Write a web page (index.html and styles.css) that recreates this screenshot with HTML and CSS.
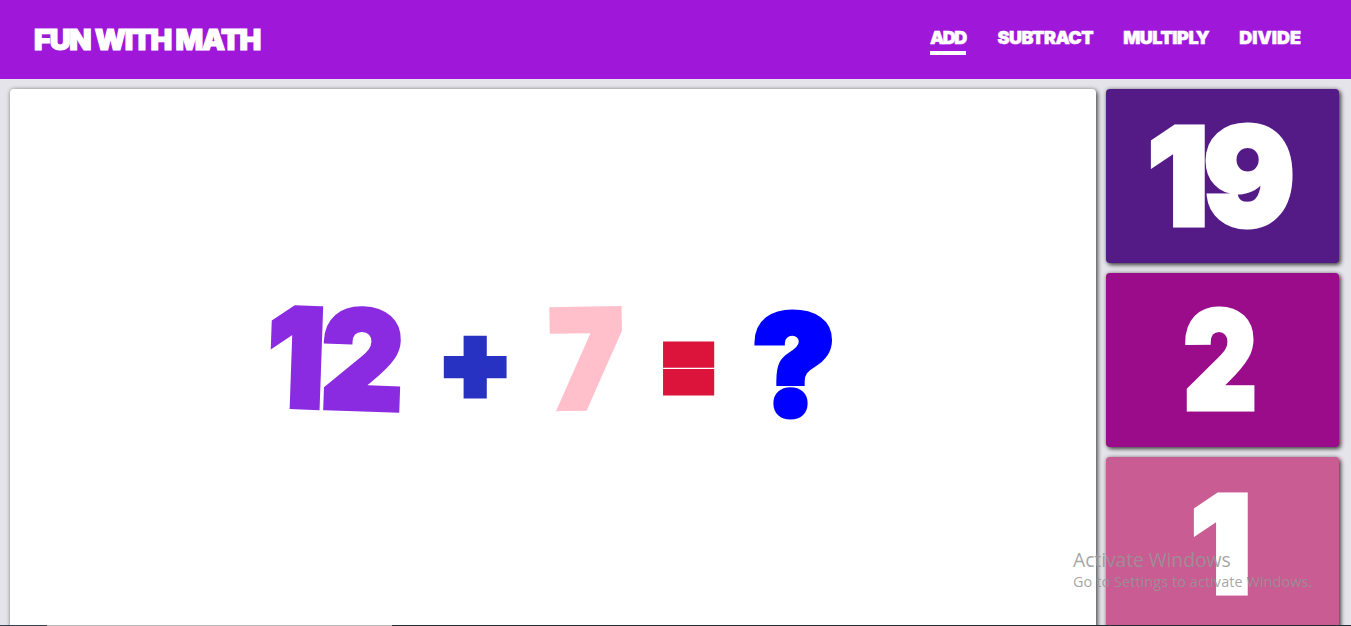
FILE: index.html
```html
<!DOCTYPE html>
<html lang="en">
<head>
<meta charset="utf-8">
<title>Fun With Math</title>
<link rel="stylesheet" href="styles.css">
</head>
<body>
<header class="topbar">
  <div class="logo">FUN WITH MATH</div>
  <nav class="nav">
    <a class="nav-link link-add active">ADD</a>
    <a class="nav-link">SUBTRACT</a>
    <a class="nav-link">MULTIPLY</a>
    <a class="nav-link link-divide">DIVIDE</a>
  </nav>
</header>
<main class="game">
  <section class="board">
    <span class="term num-a">12</span>
    <span class="term op-plus">+</span>
    <span class="term num-b">7</span>
    <span class="term op-eq">=</span>
    <span class="term ask">?</span>
  </section>
  <aside class="answers">
    <div class="answer answer-1"><span class="answer-text">19</span></div>
    <div class="answer answer-2"><span class="answer-text text-narrow">2</span></div>
    <div class="answer answer-3"><span class="answer-text">1</span></div>
  </aside>
</main>
<div class="taskbar"><i class="seg seg-a"></i><i class="seg seg-b"></i><i class="seg seg-c"></i></div>
<div class="watermark">
  <div class="wm-title">Activate Windows</div>
  <div class="wm-sub">Go to Settings to activate Windows.</div>
</div>
</body>
</html>
```
FILE: styles.css
```css
* { box-sizing: border-box; }
html, body { height: 100%; }
body {
  margin: 0;
  height: 626px;
  overflow: hidden;
  background: #e4e4ea;
  font-family: Inter, "Liberation Sans", sans-serif;
  font-weight: 900;
  color: #fff;
  position: relative;
}
.topbar {
  height: 79px;
  background: #9f18d9;
  display: flex;
  align-items: center;
  justify-content: space-between;
  padding: 0 50px 0 34px;
}
.logo {
  font-size: 29px;
  letter-spacing: -1.3px;
  line-height: 1;
  -webkit-text-stroke: 1.2px #fff;
}
.nav { display: flex; gap: 30px; }
.nav-link {
  font-size: 18px;
  line-height: 22px;
  letter-spacing: -0.5px;
  padding-top: 3px;
  padding-bottom: 2px;
  border-bottom: 4px solid transparent;
  -webkit-text-stroke: 0.5px #fff;
}
.nav-link.active { border-bottom-color: #fff; }
.link-add { letter-spacing: -1.6px; margin-right: 2px; }
.link-divide { letter-spacing: 0; }
.game {
  display: grid;
  grid-template-columns: 1086px 233px;
  gap: 10px;
  padding: 10px 0 0 10px;
  height: 556px;
}
.board {
  background: #fff;
  border-radius: 4px;
  box-shadow: 2px 2px 4px rgba(0, 0, 0, .55), 0 0 4px rgba(0, 0, 0, .3);
  display: flex;
  align-items: center;
  justify-content: center;
  gap: 34px;
  padding-right: 4px;
}
.term { display: block; line-height: 1; font-size: 146px; }
.num-a {
  color: #8a2be2;
  font-size: 136px;
  letter-spacing: -4px;
  margin: 0 -1px 6px -3px;
  transform: rotate(2deg) scaleX(.94);
  -webkit-text-stroke: 5px #8a2be2;
}
.op-plus {
  color: #2832c2;
  font-size: 108px;
  margin-bottom: 4px;
  -webkit-text-stroke: 6px #2832c2;
}
.num-b {
  color: #ffc0cb;
  font-size: 136px;
  margin: 0 -1px 6px;
  transform: rotate(-1deg) scaleX(.92);
  -webkit-text-stroke: 5px #ffc0cb;
}
.op-eq {
  color: #dc143c;
  font-size: 84px;
  -webkit-text-stroke: 7px #dc143c;
  transform: scaleY(1.3);
}
.ask {
  color: #00f;
  font-size: 140px;
  margin-top: 3px;
  -webkit-text-stroke: 5px #00f;
}
.answers { display: flex; flex-direction: column; gap: 10px; }
.answer {
  height: 174px;
  flex: none;
  border-radius: 4px;
  box-shadow: 2px 2px 4px rgba(0, 0, 0, .65), 0 0 4px rgba(0, 0, 0, .3);
  display: flex;
  align-items: center;
  justify-content: center;
  padding-right: 8px;
}
.answer-1 { background: #541b86; }
.answer-2 { background: #9a0c8a; }
.answer-3 { background: #c95c92; }
.answer-text {
  font-size: 135px;
  line-height: 1;
  letter-spacing: -5px;
  -webkit-text-stroke: 5px #fff;
}
.text-narrow { transform: scaleX(.84); }
.taskbar {
  position: absolute;
  left: 0;
  right: 0;
  bottom: 0;
  height: 1px;
  display: flex;
  background: #2a3a48;
}
.seg-a { width: 47px; background: #33424f; }
.seg-b { width: 345px; background: #b9b9b9; }
.seg-c { flex: 1; background: #232b33; }
.watermark {
  position: absolute;
  left: 1073px;
  top: 547px;
  font-family: "Open Sans", sans-serif;
  font-weight: 400;
  color: rgba(150, 150, 150, .85);
}
.wm-title { font-size: 19.4px; line-height: 25px; letter-spacing: -.1px; }
.wm-sub { font-size: 14.4px; line-height: 19px; letter-spacing: .1px; }
```
